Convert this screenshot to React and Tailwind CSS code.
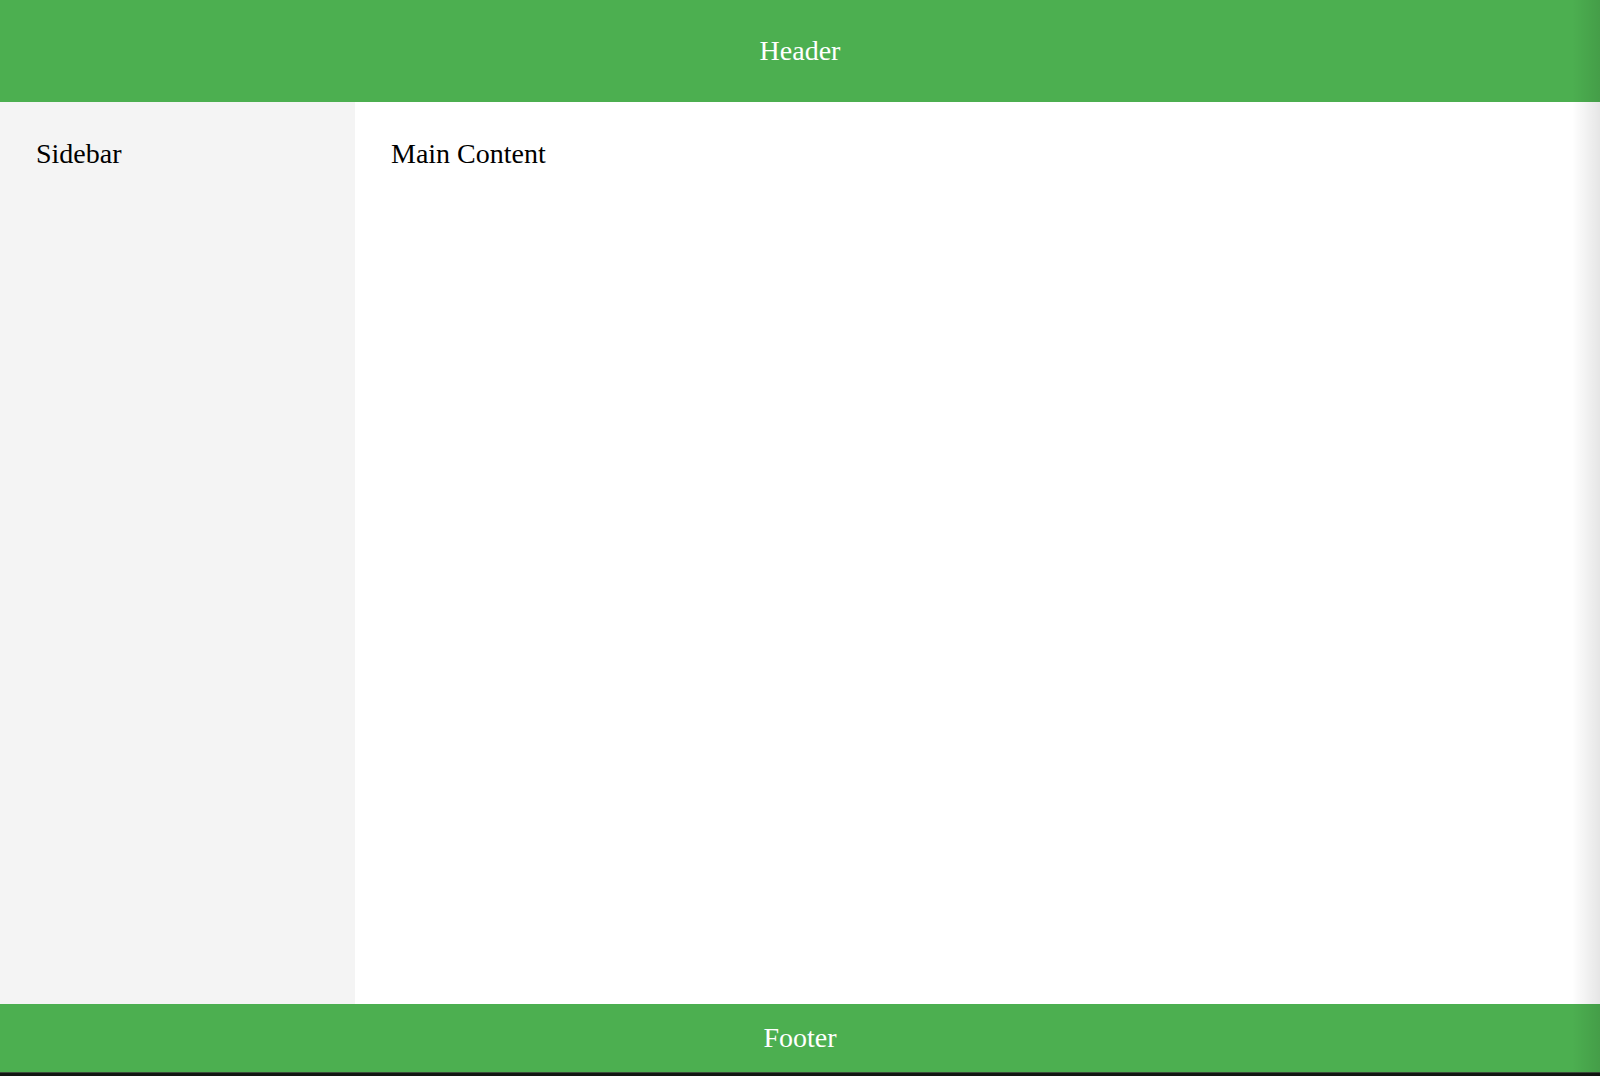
import React from "react";

function App() {
  return (
    <div
      className="relative flex flex-col h-screen bg-white text-black"
      style={{ fontFamily: '"Liberation Serif", "Times New Roman", serif' }}
    >
      <header className="h-[102px] flex items-center justify-center bg-[#4caf50] text-white text-[28px]">
        Header
      </header>

      <div className="flex flex-1">
        <aside className="w-[355px] bg-[#f4f4f4] p-9 text-[28px] leading-[31px]">
          Sidebar
        </aside>
        <main className="flex-1 p-9 text-[28px] leading-[31px]">Main Content</main>
      </div>

      <footer className="h-[68px] flex items-center justify-center bg-[#4caf50] text-white text-[28px]">
        Footer
      </footer>
      <div className="h-[4px] bg-[#121612] border-t border-[#3a4a3a]" />

      {/* edge shadow over the right side */}
      <div className="pointer-events-none absolute top-0 right-0 bottom-0 w-[28px] bg-gradient-to-l from-black/10 to-transparent" />
    </div>
  );
}

export default App;
